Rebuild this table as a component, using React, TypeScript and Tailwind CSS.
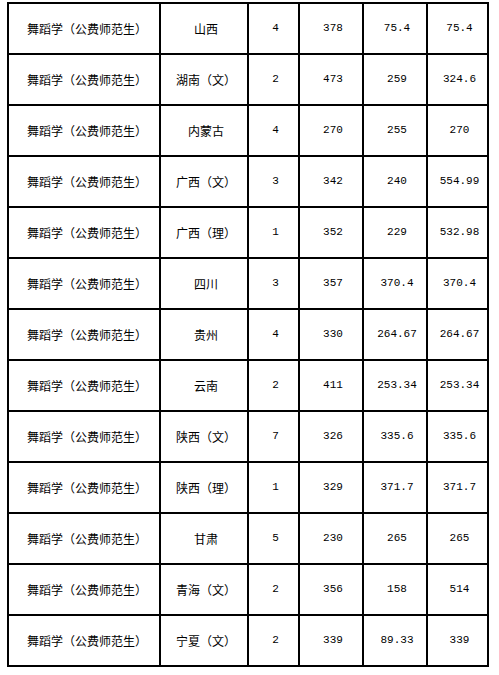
import React from "react";

const rows: [string, string, string, string, string][] = [
  ["山西", "4", "378", "75.4", "75.4"],
  ["湖南（文）", "2", "473", "259", "324.6"],
  ["内蒙古", "4", "270", "255", "270"],
  ["广西（文）", "3", "342", "240", "554.99"],
  ["广西（理）", "1", "352", "229", "532.98"],
  ["四川", "3", "357", "370.4", "370.4"],
  ["贵州", "4", "330", "264.67", "264.67"],
  ["云南", "2", "411", "253.34", "253.34"],
  ["陕西（文）", "7", "326", "335.6", "335.6"],
  ["陕西（理）", "1", "329", "371.7", "371.7"],
  ["甘肃", "5", "230", "265", "265"],
  ["青海（文）", "2", "356", "158", "514"],
  ["宁夏（文）", "2", "339", "89.33", "339"],
];

const cjk = { fontFamily: '"Noto Sans CJK SC", "Noto Sans", sans-serif' };
const mono = { fontFamily: '"Liberation Mono", "DejaVu Sans Mono", monospace' };

export default function App() {
  return (
    <div className="w-[499px] h-[675px] bg-white overflow-hidden">
      <div className="pt-[2px] pl-[7px]">
        <div className="inline-grid grid-cols-[150px_86px_49px_62px_62px_59px] auto-rows-[49px] gap-[2px] p-[2px] bg-black">
          {rows.map((r, i) => (
            <React.Fragment key={i}>
              <div
                className="bg-white flex items-center justify-center pl-[6px] text-[12px] text-black"
                style={cjk}
              >
                舞蹈学（公费师范生）
              </div>
              <div
                className="bg-white flex items-center justify-center pl-[4px] text-[12px] text-black"
                style={cjk}
              >
                {r[0]}
              </div>
              {r.slice(1).map((v, j) => (
                <div
                  key={j}
                  className="bg-white flex items-center justify-center pl-[4px] text-[11px] text-black"
                  style={mono}
                >
                  {v}
                </div>
              ))}
            </React.Fragment>
          ))}
        </div>
      </div>
    </div>
  );
}
